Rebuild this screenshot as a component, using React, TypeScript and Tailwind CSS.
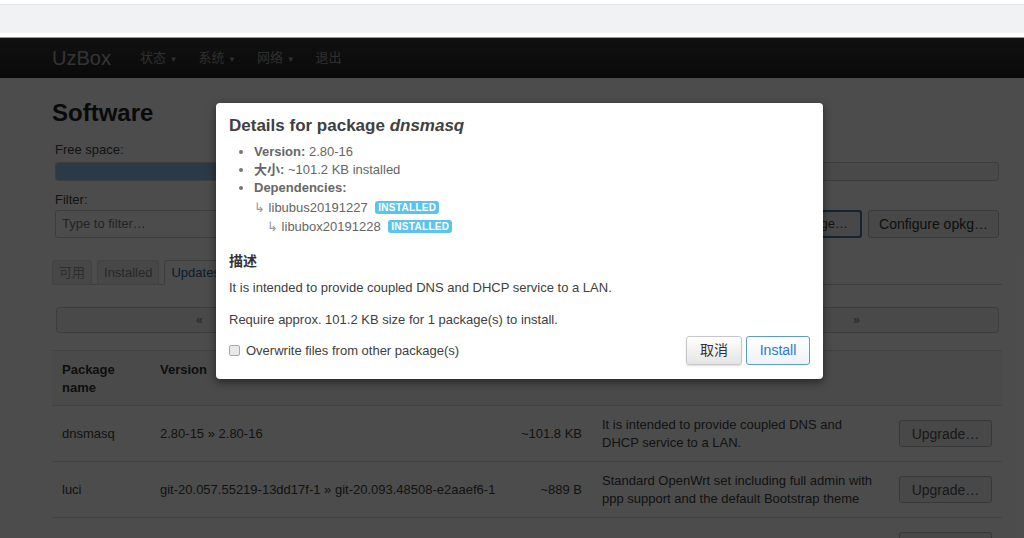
import React from "react";

const rows = [
  {
    name: "dnsmasq",
    version: "2.80-15 » 2.80-16",
    size: "~101.8 KB",
    desc: "It is intended to provide coupled DNS and DHCP service to a LAN.",
  },
  {
    name: "luci",
    version: "git-20.057.55219-13dd17f-1 » git-20.093.48508-e2aaef6-1",
    size: "~889 B",
    desc: "Standard OpenWrt set including full admin with ppp support and the default Bootstrap theme",
  },
  {
    name: "luci-app-",
    version: "",
    size: "",
    desc: "",
  },
];

function Badge() {
  return (
    <span className="ml-[4px] inline-block rounded-[3px] bg-[#5bc4ec] px-[3px] text-[10px] font-bold leading-[13px] tracking-[0.3px] text-white align-[1px]">
      INSTALLED
    </span>
  );
}

function Modal() {
  return (
    <div className="absolute left-[216px] top-[65px] w-[607px] rounded-[4px] bg-white px-[13px] pt-[13px] pb-[14px] text-[#404040] shadow-[0_3px_9px_rgba(0,0,0,0.5)]">
      <h3 className="text-[17px] font-bold leading-[20px]">
        Details for package <em>dnsmasq</em>
      </h3>
      <ul className="mt-[7px] list-disc pl-[25px] text-[13px] leading-[18px] text-[#666] marker:text-[#777]">
        <li>
          <b className="text-[#666]">Version:</b> 2.80-16
        </li>
        <li>
          <b className="text-[#666]">大小:</b> ~101.2 KB installed
        </li>
        <li>
          <b className="text-[#666]">Dependencies:</b>
          <div className="mt-[1px] leading-[19px]">
            <div>
              <span className="text-[#999]">↳</span> libubus20191227 <Badge />
            </div>
            <div className="pl-[13px]">
              <span className="text-[#999]">↳</span> libubox20191228 <Badge />
            </div>
          </div>
        </li>
      </ul>
      <h4 className="mt-[16px] text-[14px] font-bold leading-[18px] text-[#333]">描述</h4>
      <p className="mt-[9px] text-[13px] leading-[18px]">
        It is intended to provide coupled DNS and DHCP service to a LAN.
      </p>
      <p className="mt-[14px] text-[13px] leading-[18px]">
        Require approx. 101.2 KB size for 1 package(s) to install.
      </p>
      <div className="mt-[7px] flex items-center">
        <label className="flex flex-1 items-center text-[13px] text-[#404040]">
          <span className="mr-[6px] inline-block h-[11px] w-[11px] rounded-[2px] border border-[#aaa] bg-[#e8e8e8]" />
          Overwrite files from other package(s)
        </label>
        <button className="h-[29px] w-[56px] rounded-[3px] border border-[#c8c8c8] bg-gradient-to-b from-white to-[#e4e4e4] text-[14px] text-[#333] shadow-[0_1px_2px_rgba(0,0,0,0.15)]">
          取消
        </button>
        <button className="ml-[4px] h-[29px] w-[64px] rounded-[3px] border-[1.5px] border-[#5a9ad8] bg-gradient-to-b from-white to-[#eef3f8] text-[14px] text-[#2a7ad2]">
          Install
        </button>
      </div>
    </div>
  );
}

export default function App() {
  return (
    <div className="relative h-[538px] w-[1024px] overflow-hidden bg-white font-['Liberation_Sans','Noto_Sans_CJK_SC',sans-serif]">
      <div className="h-[4px] bg-white" />
      <div className="h-[29px] border-t border-[#e4e5e7] bg-[#f1f2f4]" />
      <div className="h-[4px] bg-white" />
      <div className="h-px bg-[#9a9a9a]" />

      <div className="relative">
        <nav className="flex h-[40px] items-center bg-gradient-to-b from-[#3a3a3a] to-[#222] pl-[52px]">
          <span className="text-[20px] text-[#b0b0b0]">UzBox</span>
          <div className="ml-[29px] flex gap-[21px] text-[13px] text-[#9d9d9d]">
            <span>
              状态 <span className="text-[8px]">▼</span>
            </span>
            <span>
              系统 <span className="text-[8px]">▼</span>
            </span>
            <span>
              网络 <span className="text-[8px]">▼</span>
            </span>
            <span>退出</span>
          </div>
        </nav>

        <div className="ml-[52px] w-[950px] text-[13px] text-[#404040]">
          <h2 className="mt-[20px] text-[24px] font-bold leading-[30px] text-[#222]">Software</h2>

          <div className="mx-[3px]">
            <div className="mt-[13px] leading-[18px]">Free space:</div>
            <div className="mt-[3px] h-[19px] rounded-[3px] border border-[#ccc] bg-[#f5f5f5]">
              <div className="h-full w-[52%] rounded-l-[3px] bg-[#8fc4ee]" />
            </div>

            <div className="mt-[10px] leading-[18px]">Filter:</div>
            <div className="mt-[1px] flex gap-[6px]">
              <div className="flex h-[28px] flex-1 items-center rounded-[3px] border border-[#ccc] px-[6px] text-[#777]">
                Type to filter…
              </div>
              <button className="h-[28px] rounded-[3px] border border-[#bbb] bg-[#f0f0f0] px-[12px] text-[13px]">
                Update lists…
              </button>
              <button className="h-[28px] rounded-[3px] border-2 border-[#3a7cb6] bg-[#f0f0f0] px-[12px] text-[13px]">
                Upload Package…
              </button>
              <button className="h-[28px] w-[131px] rounded-[3px] border border-[#bbb] bg-[#f0f0f0] text-[14px] text-[#333]">
                Configure opkg…
              </button>
            </div>
          </div>

          <div className="mt-[22px] flex gap-[5px] border-b border-[#ccc] pr-[50px]">
            <div className="-mb-px h-[25px] rounded-t-[3px] border border-[#ddd] bg-[#eee] px-[6px] leading-[24px] text-[#999]">
              可用
            </div>
            <div className="-mb-px h-[25px] rounded-t-[3px] border border-[#ddd] bg-[#eee] px-[6px] leading-[24px] text-[#888]">
              Installed
            </div>
            <div className="-mb-px h-[25px] rounded-t-[3px] border border-[#ccc] border-b-white bg-white px-[6px] leading-[24px] text-[#1f5f99]">
              Updates
            </div>
          </div>

          <div className="ml-[4px] mr-[3px] mt-[22px] flex h-[26px] items-center rounded-[3px] border border-[#ccc] bg-[#f5f5f5] text-[12px] text-[#777]">
            <span className="ml-[139px]">«</span>
            <span className="ml-auto mr-[138px]">»</span>
          </div>

          <table className="mt-[17px] w-[950px] table-fixed border-collapse text-[13px] leading-[18px]">
            <colgroup>
              <col className="w-[98px]" />
              <col className="w-[360px]" />
              <col className="w-[82px]" />
              <col className="w-[296px]" />
              <col className="w-[114px]" />
            </colgroup>
            <thead>
              <tr className="border-t border-[#ddd] bg-[#f9f9f9] font-bold text-[#333]">
                <th className="px-[10px] pb-[8px] pt-[10px] text-left align-top">Package name</th>
                <th className="px-[10px] pb-[8px] pt-[10px] text-left align-top">Version</th>
                <th className="px-[10px] pb-[8px] pt-[10px] text-right align-top">Size</th>
                <th className="px-[10px] pb-[8px] pt-[10px] text-left align-top">Description</th>
                <th className="px-[10px] pb-[8px] pt-[10px]" />
              </tr>
            </thead>
            <tbody>
              {rows.map((r) => (
                <tr key={r.name} className="h-[56px] border-t border-[#ddd]">
                  <td className="px-[10px]">{r.name}</td>
                  <td className="whitespace-nowrap px-[10px]">{r.version}</td>
                  <td className="px-[10px] text-right">{r.size}</td>
                  <td className="px-[10px]">{r.desc}</td>
                  <td className="pl-[11px]">
                    <button className="h-[27px] w-[93px] rounded-[3px] border border-[#bbb] bg-[#f0f0f0] text-[14px] text-[#555]">
                      Upgrade…
                    </button>
                  </td>
                </tr>
              ))}
            </tbody>
          </table>
        </div>

        <div className="absolute inset-0 bg-black/70">
          <Modal />
        </div>
      </div>
    </div>
  );
}
